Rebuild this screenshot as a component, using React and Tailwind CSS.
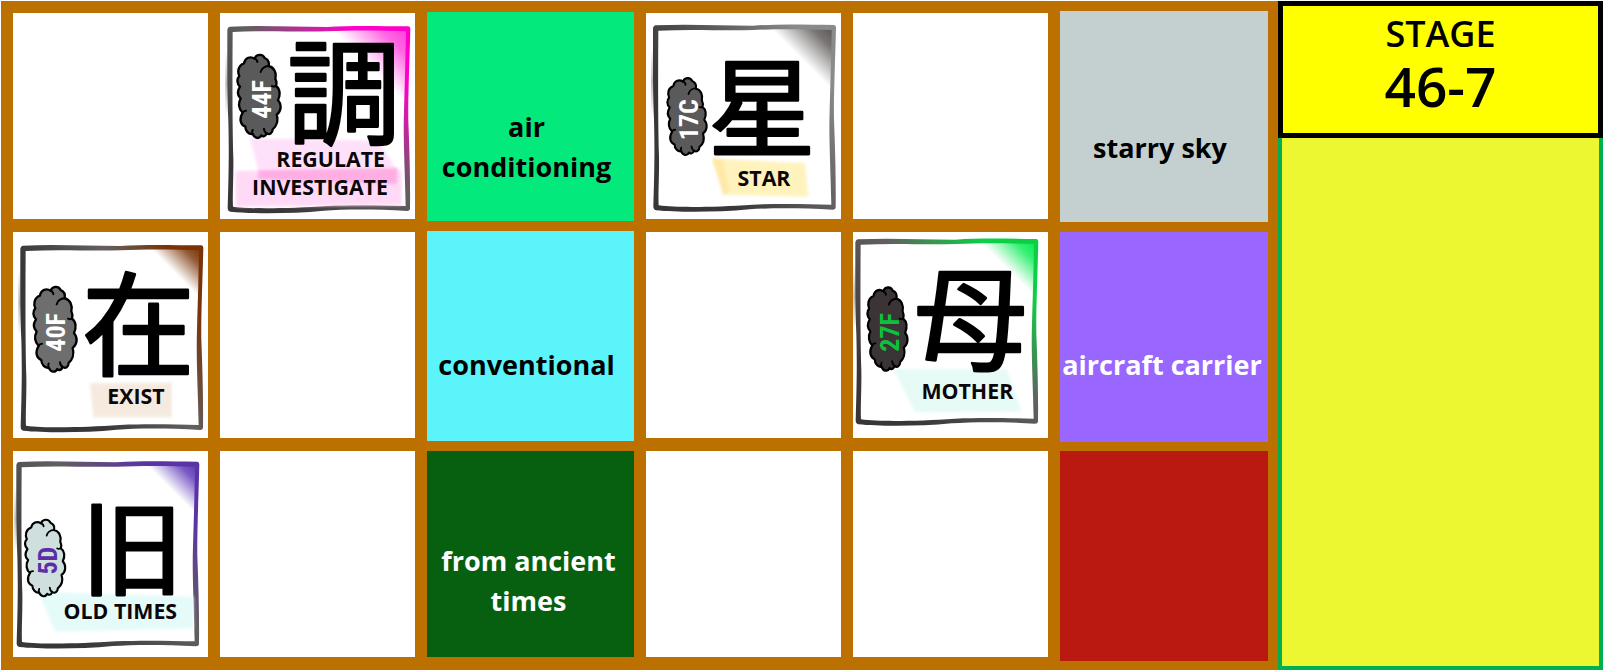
import React from "react";

const CLOUD =
  "M22 28 C25 10 42 6 54 14 C58 0 78 -2 84 12 C94 16 98 26 96 36 C112 40 120 56 116 74 C120 82 120 90 118 96 C130 104 132 122 124 138 C136 152 134 172 120 182 C126 202 118 218 108 226 C108 238 98 244 90 238 C86 250 76 248 74 244 C68 256 54 254 48 240 C36 242 26 230 26 218 C12 212 6 196 18 176 C6 166 4 148 12 134 C2 124 2 110 10 98 C0 88 0 74 8 66 C2 54 4 34 22 28 Z";
const CURLS =
  "M96 36 C84 36 74 44 72 54 M54 14 C60 16 62 20 62 24 M90 238 C84 234 82 230 82 224 M48 240 C46 236 46 232 48 228 M18 176 C20 172 24 170 28 170 M118 96 C112 98 108 98 106 96";

const CARDS = {
  regulate: {
    view: "15 9 585 618", frame: [6, 3], cloud: [65, 132, 1, 1], cloudFill: "#5a5a5a",
    code: "44F", codeFill: "#ffffff", codeX: 168, codeY: 268,
    kanji: "調", kx: 387, ky: 374, size: 340, accent: "#ff00c8", glow: "#ff3fdc", reach: 1.5, fade: 0.9,
    marks: [["105,385 490,392 545,480 130,480", "#ffe0fa"], ["62,482 560,482 560,585 62,590", "#ffd9f6"], ["130,480 548,474 545,522 130,508", "#ffaee4"]],
    labels: [["REGULATE", 347, 472], ["INVESTIGATE", 315, 556]],
  },
  star: {
    view: "18 9 585 618", frame: [8, -1], cloud: [80, 202, 0.91, 0.925], cloudFill: "#5a5a5a",
    code: "17C", codeFill: "#ffffff", codeX: 173, codeY: 329,
    kanji: "星", kx: 366, ky: 415, size: 322, accent: "#8a8a8a", glow: "#5a5454", reach: 1.25, fade: 0.6,
    marks: [["217,445 495,460 505,560 260,555", "#fff3bd"], ["217,445 250,450 268,545 250,557", "#ffe9a8"]],
    labels: [["STAR", 372, 527]],
  },
  exist: {
    view: "9 6 585 618", frame: [0, 0], cloud: [68, 168, 1, 1.02], cloudFill: "#6e6e6e",
    code: "40F", codeFill: "#ffffff", codeX: 166, codeY: 307,
    kanji: "在", kx: 385, ky: 411, size: 338, accent: "#7a3306", glow: "#7a3306", reach: 1, fade: 0.5,
    marks: [["240,460 485,458 485,562 250,562", "#f4eadf"]],
    labels: [["EXIST", 378, 523]],
  },
  mother: {
    view: "24 21 585 618", frame: [0, -4], cloud: [65, 185, 0.93, 1], cloudFill: "#3a3436",
    code: "27F", codeFill: "#0cc23c", codeX: 163, codeY: 322,
    kanji: "母", kx: 377, ky: 409, size: 338, accent: "#0ccf45", glow: "#00ec4e", reach: 1.1, fade: 0.85,
    marks: [["145,432 485,432 530,560 210,562", "#e6fbf6"]],
    labels: [["MOTHER", 367, 523]],
  },
  old: {
    view: "24 18 585 618", frame: [3, 4], cloud: [58, 222, 0.93, 0.92], cloudFill: "#cfdfde",
    code: "5D", codeFill: "#5c2ea6", codeX: 155, codeY: 347,
    kanji: "旧", kx: 381, ky: 425, size: 308, accent: "#5a34a4", glow: "#5a34b8", reach: 1, fade: 0.8,
    marks: [["100,440 565,455 565,550 150,560", "#e4fbf9"]],
    labels: [["OLD TIMES", 346, 523]],
  },
};

function KanjiCard({ id }) {
  const c = CARDS[id];
  const [fx, fy] = c.frame;
  const [cx, cy, sx, sy] = c.cloud;
  const r = 150 * c.reach;
  return (
    <svg viewBox={c.view} className="block h-full w-full overflow-visible">
      <defs>
        <linearGradient id={`${id}-frame`} x1="0.2" y1={c.fade} x2="1" y2="0.1">
          <stop offset="0" stopColor="#383636" />
          <stop offset="0.5" stopColor="#625f60" />
          <stop offset="0.85" stopColor={c.accent} />
        </linearGradient>
        <linearGradient id={`${id}-glow`} x1="1" y1="0" x2="0.5" y2="0.5">
          <stop offset="0" stopColor={c.glow} />
          <stop offset="0.35" stopColor={c.glow} stopOpacity="0.8" />
          <stop offset="1" stopColor={c.glow} stopOpacity="0" />
        </linearGradient>
        <linearGradient id={`${id}-shade`} x1="0" y1="0" x2="0" y2="1">
          <stop offset="0" stopColor="#999999" stopOpacity="0" />
          <stop offset="0.5" stopColor="#999999" stopOpacity="0.7" />
          <stop offset="1" stopColor="#999999" stopOpacity="0" />
        </linearGradient>
        <filter id={`${id}-soft`}>
          <feGaussianBlur stdDeviation="5" />
        </filter>
      </defs>
      <g transform={`translate(${fx} ${fy})`}>
        <path d={`M${572 - r} 56 H572 V${56 + r} Z`} fill={`url(#${id}-glow)`} />
        <path d="M25 120 H34 V315 H25 Z" fill={`url(#${id}-shade)`} />
        <path
          fillRule="evenodd"
          fill={`url(#${id}-frame)`}
          d="M38 47 C140 42 230 48 330 48 C420 42 500 46 574 46 Q580 47 580 54 C577 170 573 260 574 330 C578 430 580 520 579 594 Q578 600 570 600 C470 594 380 595 320 599 C220 609 100 608 40 602 Q32 600 32 590 C36 470 36 400 34 330 C30 220 31 140 31 56 Q32 48 38 47 Z M47 63 C46 200 46 340 49 440 C50 500 46 550 48 587 C110 595 220 592 330 585 C420 581 500 584 566 585 C564 480 558 380 561 300 C564 200 566 130 567 61 C500 59 420 57 330 61 C230 63 140 58 47 63 Z"
        />
      </g>
      {c.marks.map(([points, fill]) => (
        <polygon key={points} points={points} fill={fill} filter={`url(#${id}-soft)`} />
      ))}
      <g transform={`translate(${cx} ${cy}) scale(${sx} ${sy})`} strokeLinecap="round" strokeLinejoin="round" stroke="#000">
        <path d={CLOUD} fill={c.cloudFill} strokeWidth="7" />
        <path d={CURLS} fill="none" strokeWidth="6" />
      </g>
      <text
        transform={`translate(${c.codeX} ${c.codeY}) rotate(-90)`}
        textAnchor="middle"
        fill={c.codeFill}
        className="font-['Liberation_Sans_Narrow','Roboto_Condensed','Roboto',sans-serif] text-[78px] font-bold"
      >
        {c.code}
      </text>
      <text
        x={c.kx}
        y={c.ky}
        textAnchor="middle"
        fontSize={c.size}
        stroke="#000"
        strokeWidth="8"
        strokeLinejoin="round"
        className="font-['Liberation_Sans','Noto_Sans_CJK_JP',sans-serif]"
      >
        {c.kanji}
      </text>
      {c.labels.map(([label, x, y]) => (
        <text key={label} x={x} y={y} textAnchor="middle" fill="#0b0608" className="font-['Open_Sans',sans-serif] text-[64px] font-bold">
          {label}
        </text>
      ))}
    </svg>
  );
}

const Blank = () => <div className="bg-white" />;
const Card = ({ id }) => (
  <div className="min-h-0 bg-white">
    <KanjiCard id={id} />
  </div>
);
const Clue = ({ className, children }) => (
  <div className={`flex flex-col justify-end text-center text-[27px] leading-10 font-bold ${className}`}>{children}</div>
);

export default function App() {
  return (
    <main className="grid min-h-screen grid-cols-[1277fr_325fr] bg-white pt-px pr-px pl-px font-['Open_Sans',sans-serif] text-black">
      <section className="grid grid-cols-[195fr_195fr_207fr_195fr_195fr_208fr] grid-rows-3 gap-x-3 gap-y-[13px] bg-[#bc7000] pt-3 pr-[10px] pb-[13px] pl-3">
        <Blank />
        <Card id="regulate" />
        <Clue className="-mt-px -mb-0.5 bg-[#04e97b] pr-2 pb-[34px]">
          <p>
            air
            <br />
            conditioning
          </p>
        </Clue>
        <Card id="star" />
        <Blank />
        <Clue className="-mt-0.5 -mb-[3px] bg-[#c3d0cf] pr-2 pb-[54px]">
          <p>starry sky</p>
        </Clue>

        <Card id="exist" />
        <Blank />
        <Clue className="-mt-px -mb-[3px] bg-[#5cf4fb] pr-2 pb-[56px]">
          <p>conventional</p>
        </Clue>
        <Blank />
        <Card id="mother" />
        <Clue className="-mb-1 bg-[#9966ff] pr-1 pb-[57px] text-white">
          <p>aircraft carrier</p>
        </Clue>

        <Card id="old" />
        <Blank />
        <Clue className="bg-[#066010] pr-1 pb-[36px] text-white">
          <p>
            from ancient
            <br />
            times
          </p>
        </Clue>
        <Blank />
        <Blank />
        <Clue className="-mb-1 bg-[#b9190f]" />
      </section>

      <aside className="flex flex-col border-4 border-t-0 border-[#00b050] bg-[#edf731]">
        <header className="-mx-1 flex h-[137px] flex-col items-center border-[5px] border-black bg-[#ffff00] pt-1 font-semibold">
          <h1 className="text-[36px] leading-[48px]">STAGE</h1>
          <p className="text-[55px] leading-[56px]">46-7</p>
        </header>
      </aside>
    </main>
  );
}
